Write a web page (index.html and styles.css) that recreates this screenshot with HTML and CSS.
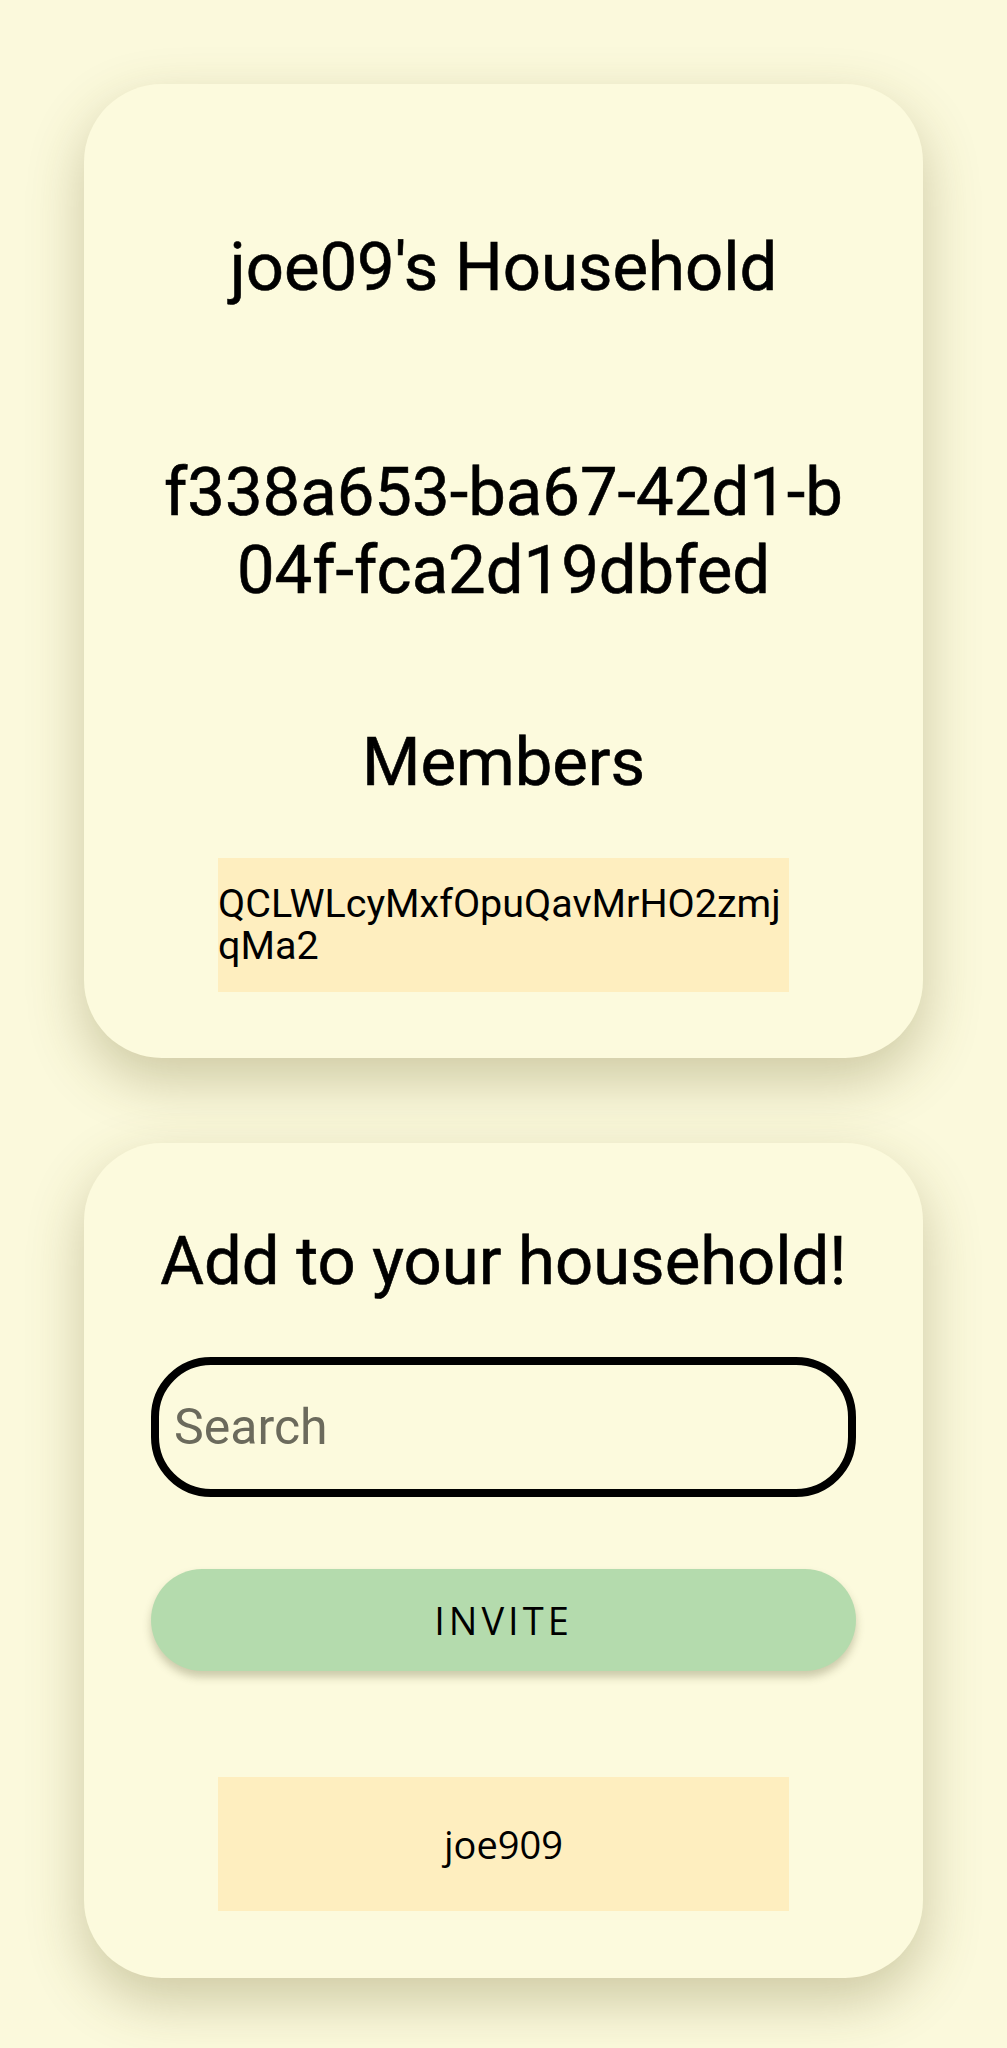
FILE: index.html
```html
<!DOCTYPE html>
<html>
<head>
<meta charset="utf-8">
<link rel="stylesheet" href="styles.css">
</head>
<body>
<main class="page">
  <section class="card card-house">
    <h1 class="heading title">joe09's Household</h1>
    <h1 class="heading code">f338a653-ba67-42d1-b04f-fca2d19dbfed</h1>
    <h1 class="heading members-title">Members</h1>
    <div class="member-box"><span class="member-id">QCLWLcyMxfOpuQavMrHO2zmjqMa2</span></div>
  </section>
  <section class="card card-add">
    <h1 class="heading add-title">Add to your household!</h1>
    <input class="search" type="text" placeholder="Search">
    <button class="invite">INVITE</button>
    <div class="member-box result"><span class="member-name">joe909</span></div>
  </section>
</main>
</body>
</html>
```
FILE: styles.css
```css
html, body {
  margin: 0;
  padding: 0;
  background: #fbf9dc;
}
body {
  font-family: Roboto, "Liberation Sans", sans-serif;
  color: #000;
}
.page {
  display: flex;
  flex-direction: column;
  gap: 85px;
  padding: 84px 84px 80px;
}
.card {
  background: #fcfadd;
  border-radius: 78px;
  padding: 0 67px;
  box-shadow: 0 22px 56px rgba(100, 90, 30, 0.3);
  display: flex;
  flex-direction: column;
}
.card-house {
  padding-top: 144px;
  padding-bottom: 66px;
}
.card-add {
  padding-top: 79px;
  padding-bottom: 67px;
}
.heading {
  margin: 0;
  font-size: 67px;
  line-height: 78px;
  font-weight: 400;
  -webkit-text-stroke: 0.6px #000;
  text-align: center;
  word-break: break-all;
}
.code {
  margin-top: 147px;
}
.members-title {
  margin-top: 114px;
}
.member-box {
  width: 571px;
  height: 134px;
  margin: 57px auto 0;
  background: #feeebf;
  display: flex;
  align-items: center;
  justify-content: center;
}
.member-id {
  font-size: 39.5px;
  line-height: 42px;
  word-break: break-all;
}
.search {
  box-sizing: border-box;
  width: 100%;
  height: 140px;
  margin-top: 57px;
  border: 8px solid #000;
  border-radius: 60px;
  background: transparent;
  padding: 0 15px;
  font-family: Roboto, "Liberation Sans", sans-serif;
  font-size: 50px;
  color: #000;
  outline: none;
}
.search::placeholder {
  color: #6b6a5c;
}
.invite {
  width: 100%;
  height: 102px;
  margin-top: 72px;
  border: 0;
  border-radius: 51px;
  background: #b4dbad;
  box-shadow: 0 6px 8px rgba(60, 60, 20, 0.25);
  font-family: "Open Sans", "Noto Sans", sans-serif;
  font-size: 38px;
  letter-spacing: 4px;
  color: #000;
}
.result {
  margin-top: 106px;
}
.member-name {
  font-family: "Open Sans", "Noto Sans", sans-serif;
  font-size: 38px;
  font-weight: 500;
}
```
